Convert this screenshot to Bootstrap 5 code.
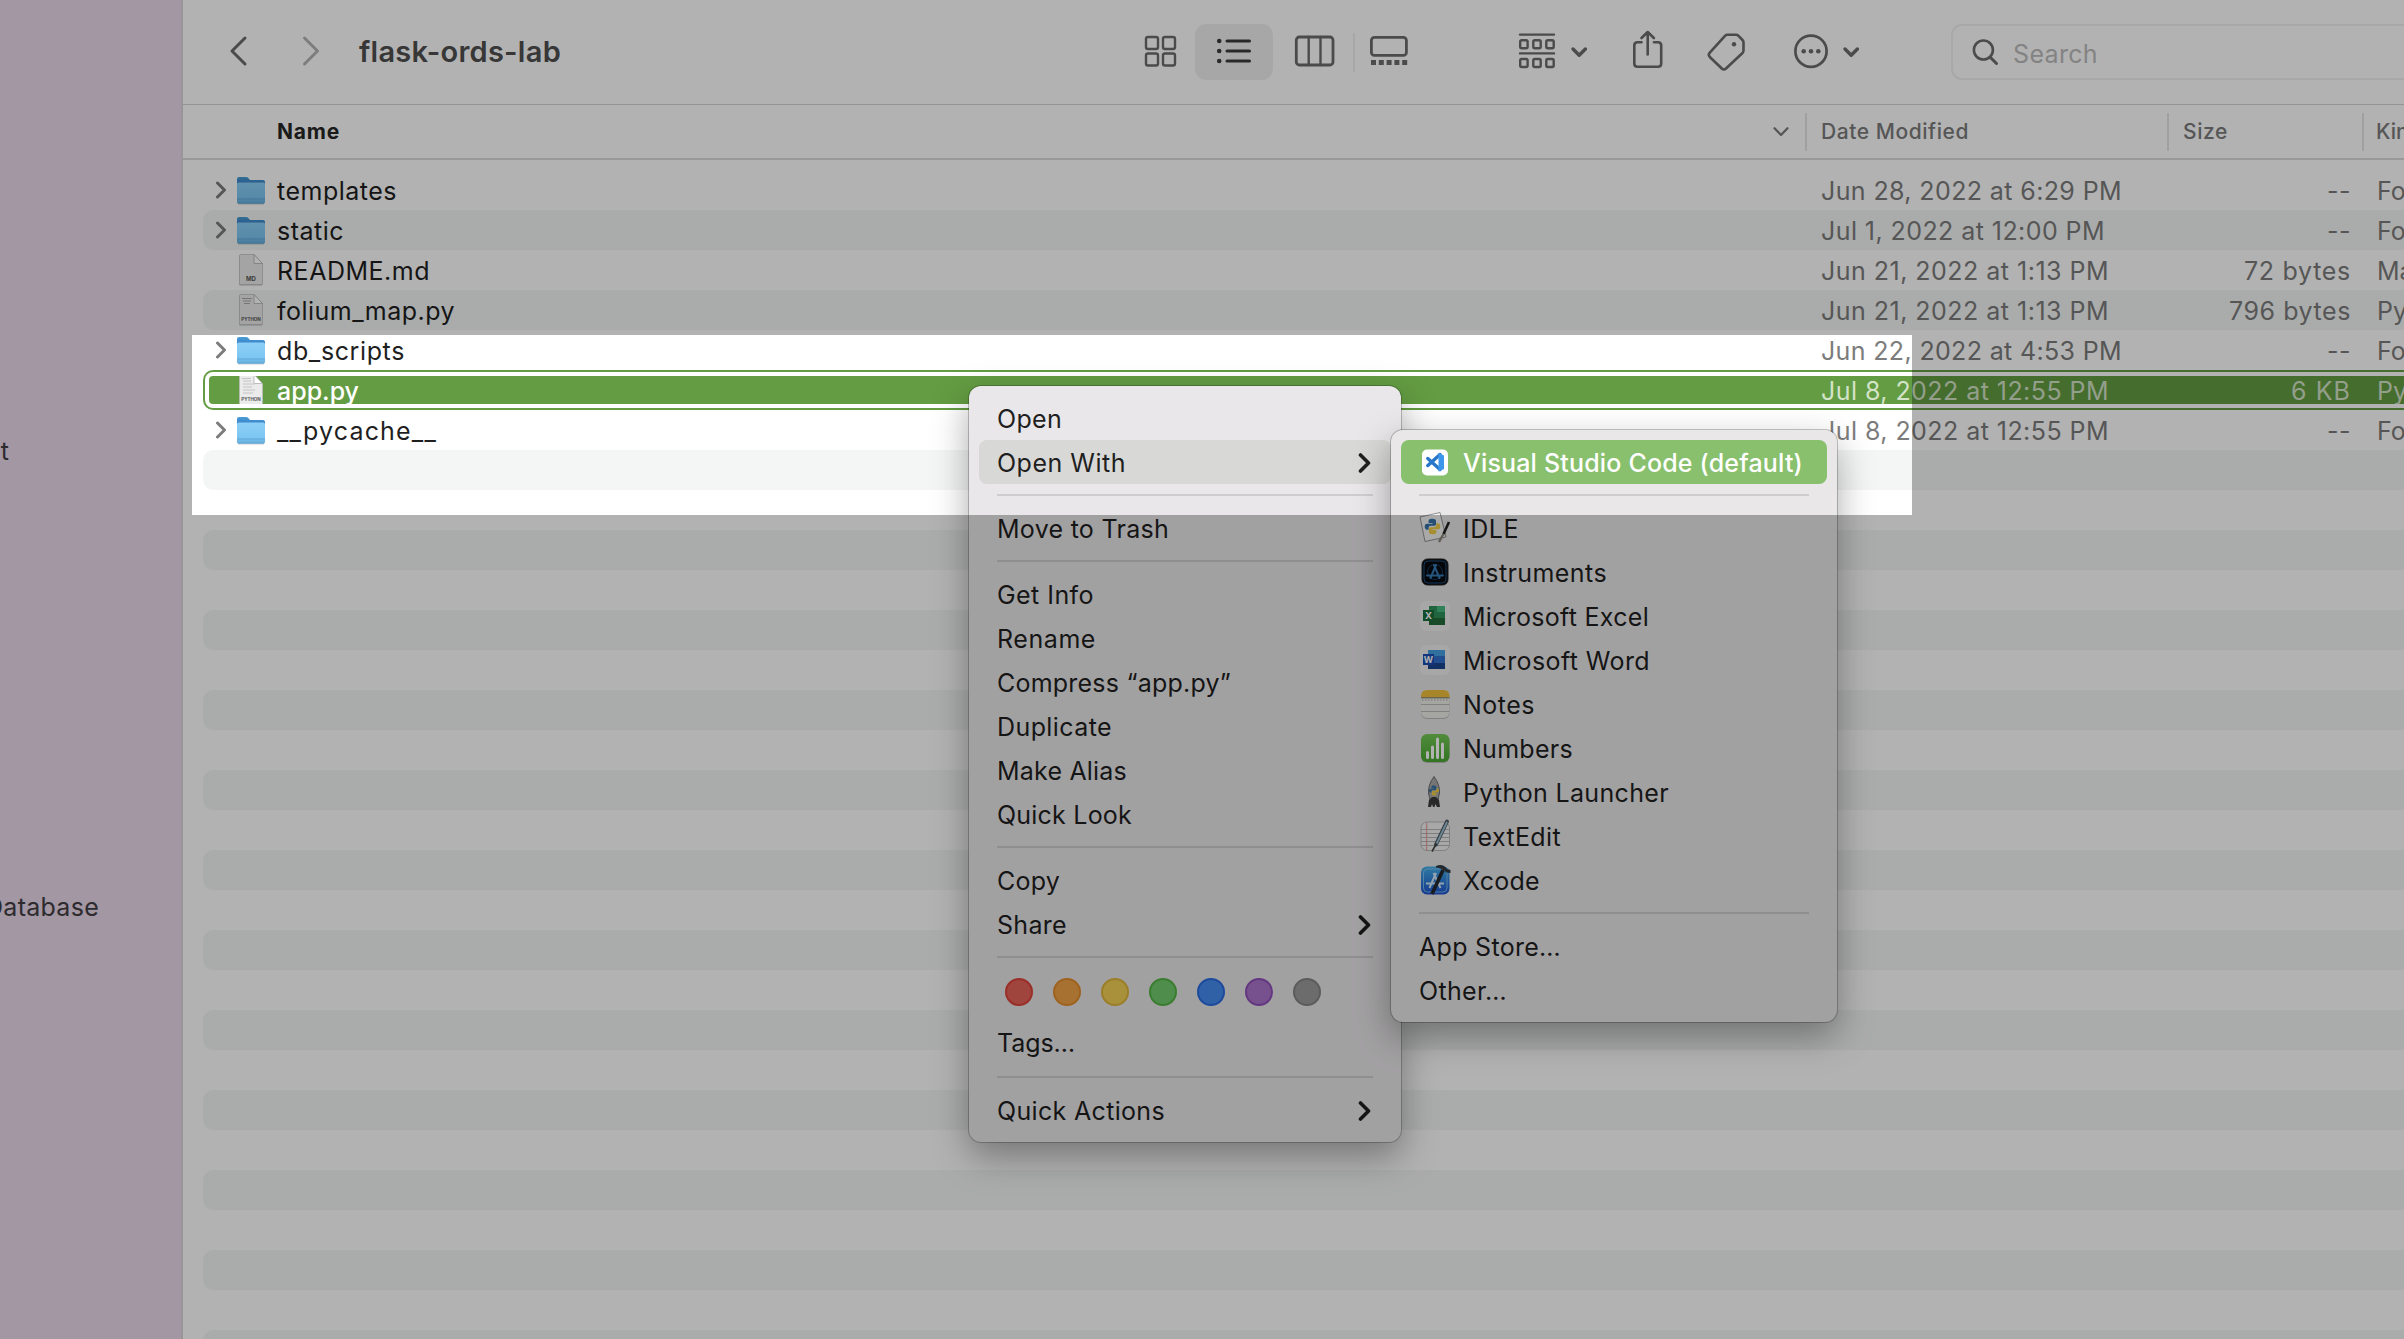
<!DOCTYPE html>
<html lang="en">
<head>
<meta charset="utf-8">
<title>flask-ords-lab</title>
<link href="https://cdn.jsdelivr.net/npm/bootstrap@5.3.0/dist/css/bootstrap.min.css" rel="stylesheet">
<style>
html,body{height:100%}
body{width:2404px;height:1339px;overflow:hidden;position:relative;background:#fff;font-family:Inter,"Liberation Sans",sans-serif;font-size:25px;color:#1f1f1f;line-height:1}
svg{display:block;flex:none;overflow:visible}
.ln{fill:none;stroke:currentColor;stroke-linecap:round;stroke-linejoin:round}
.side{width:183px;background:#e9d8ea;border-right:2px solid #dad6dd;color:#433e44}
.side-item{width:99px;height:44px;line-height:46px;direction:rtl;white-space:nowrap}
.side-item span{direction:ltr;display:inline-block}
.side-item.side-one{margin-top:428px;width:9px}
.side-two{margin-top:412px}
.win{min-width:0}
.toolbar-top{flex:none;height:105px;border-bottom:1px solid #d6d6d6;color:#6c6c6c;padding-left:45px}
.toolbar-top>*{flex:none}
.win-title{width:786px;margin-left:38px;font-size:29px;font-weight:600;color:#505050;padding-bottom:2px}
.view-on{width:78px;height:56px;border-radius:11px;background:#f0f0f0;color:#3c3c3c}
.vline{width:2px;height:39px;background:#f0f0f0}
.finder-search{width:470px;height:56px;border:2px solid #f1f1f1;border-radius:11px;padding-left:19px;color:#6c6c6c}
.finder-search span{color:#bcbcbc;padding-top:5px}
.heads{flex:none;height:55px;border-bottom:2px solid #dcdcdc;font-size:21px;font-weight:500;color:#7c7c7c}
.heads>*{flex:none;white-space:nowrap}
.h-name{width:1590px;padding-left:94px;color:#262626;font-weight:700}
.h-date{width:360px;padding-left:14px}
.h-size{width:193px;padding-left:14px}
.h-kind{padding-left:12px}
.cut{width:2px;height:38px;background:#e6e6e6}
.files{flex:none;padding:10px 0 0 20px}
.line-row{height:40px;white-space:nowrap;border-radius:10px 0 0 10px;flex:none}
.line-row:nth-child(even){background:#f4f6f5}
.cells{height:40px}
.cells>*{flex:none}
.c-tw{width:33px;padding-left:12px;color:#7c7c7c}
.c-ic{width:41px}
.c-name{width:1544px;padding-top:2px}
.c-date{width:360px;padding-top:2px}
.c-size{width:170px;padding-top:2px;text-align:right}
.c-kind{padding:2px 0 0 26px}
.dimtxt{color:#7c7c7c}
.line-row.picked{background:#fff;border:2px solid #639c42;border-right:0;padding:4px 0 4px 4px}
.picked-in{height:28px;background:#639c42;border-radius:4px 0 0 4px;overflow:hidden;color:#fff}
.picked .cells{margin:-6px 0 0 -6px}
.picked .c-name{font-weight:500}
.picked .dimtxt{color:#d3e3c8}
.ctx{position:absolute;background:#e9e7e9;border-radius:12px;padding:10px;box-shadow:0 0 0 1px rgba(0,0,0,.22),0 14px 36px rgba(0,0,0,.34);white-space:nowrap}
.ctx-a{left:969px;top:386px;width:432px;height:756px}
.ctx-b{left:1391px;top:430px;width:446px;height:592px;background:#e9e7e8}
.mi{height:44px;padding:2px 20px 0 18px;border-radius:8px}
.ctx-b .mi{padding-left:18px}
.mi.hov{background:#d8d8d7}
.mi.act{background:#88c06d;color:#fff;font-weight:500}
.rule{height:2px;margin:10px 18px;background:#cfcdcf}
.dots{height:52px;padding:0 0 4px 26px;gap:20px}
.rule.rule-low{margin-top:12px}
.dot{width:28px;height:28px;border-radius:50%;border:2px solid}
.mi-ic{width:45px;margin-left:-1px;padding-bottom:2px}
.spot{position:absolute;left:192px;top:335px;width:1720px;height:180px;box-shadow:0 0 0 2600px rgba(0,0,0,.3);pointer-events:none;z-index:20}
.m-19{margin-left:19px}.m-22{margin-left:22px}.m-15{margin-left:15px}.m-111{margin-left:111px}.m-16{margin-left:16px}.m-46{margin-left:46px}.m-45{margin-left:44px}.m-49{margin-left:49px}.m-92{margin-left:92px}.m-53{margin-left:53px}
</style>
<script src="https://cdn.jsdelivr.net/npm/bootstrap@5.3.0/dist/js/bootstrap.bundle.min.js"></script>
</head>
<body>
<svg width="0" height="0" class="position-absolute" aria-hidden="true">
<defs>
<linearGradient id="gf" x1="0" y1="0" x2="0" y2="1"><stop offset="0" stop-color="#8bd0f8"/><stop offset=".75" stop-color="#7cc5f2"/><stop offset="1" stop-color="#5fa9d8"/></linearGradient>
<linearGradient id="gb" x1="0" y1="0" x2="0" y2="1"><stop offset="0" stop-color="#4a9fd6"/><stop offset="1" stop-color="#2f6fc0"/></linearGradient>
<linearGradient id="gn" x1="0" y1="0" x2="0" y2="1"><stop offset="0" stop-color="#74c957"/><stop offset="1" stop-color="#48a830"/></linearGradient>
<linearGradient id="gx" x1="0" y1="0" x2="0" y2="1"><stop offset="0" stop-color="#44b0ea"/><stop offset="1" stop-color="#1d52cc"/></linearGradient>
<symbol id="tw" viewBox="0 0 12 18"><path class="ln" stroke-width="3" d="M2.500 2 9.500 9 2.500 16"/></symbol>
<symbol id="folder" viewBox="0 0 30 40"><path d="M2 30h26v4.500h-26z" fill="#000" opacity=".2"/><path d="M1 9q0-2 2-2h7q1.500 0 2.500 1.200L14 10h13q2 0 2 2v6H1z" fill="url(#gb)"/><path d="M1 14q0-1.500 1.500-1.500h25q1.500 0 1.500 1.500v18q0 1.700-1.700 1.700H2.700Q1 33.700 1 32z" fill="url(#gf)"/><path d="M1 29h28" stroke="#5ea7d6"/></symbol>
<symbol id="filei" viewBox="0 0 30 40"><path d="M4.500 5H18l8 9v20.500H3.500V5z" fill="#000" opacity=".25" transform="translate(0 1)"/><path d="M4 4.500h14l8.500 9.500v20.500H3.500V5z" fill="#ebebeb" stroke="#bbb" stroke-width=".7"/><path d="M18 4.500V13.500h8.500z" fill="#fff" stroke="#b0b0b0" stroke-width=".8"/></symbol>
<symbol id="py" viewBox="0 0 24 24"><path d="M12 1c-5 0-5.500 1.500-5.500 3.500V7H12v1H4.500C2 8 1 9.500 1 12s1 4.500 3.500 4.500h2V14c0-2 1.500-3 3-3h5c1.500 0 2.500-1 2.500-2.500v-4C17 2 15 1 12 1z" fill="#3572a5"/><path d="M12 23c5 0 5.500-1.500 5.500-3.500V17H12v-1h7.500c2.500 0 3.500-1.500 3.500-4s-1-4.500-3.500-4.500h-2V10c0 2-1.500 3-3 3h-5C8 13 7 14 7 15.500v4C7 22 9 23 12 23z" fill="#f0cc45"/></symbol>
<symbol id="go" viewBox="0 0 14 22"><path class="ln" stroke-width="3.600" d="M3.500 3 11.500 11 3.500 19"/></symbol>
</defs>
</svg>

<div class="d-flex h-100">
<aside class="side flex-shrink-0">
<div class="side-item side-one"><span>t</span></div>
<div class="side-item side-two"><span data-w="114">Database</span></div>
</aside>
<main class="win flex-grow-1 d-flex flex-column overflow-hidden">
<header class="toolbar-top d-flex align-items-center">
<svg width="20" height="40" viewBox="228 32 20 40"><path class="ln" stroke-width="3" d="M245 38 232 51 245 64"/></svg>
<svg class="m-53" width="20" height="40" viewBox="301 32 20 40" style="color:#b4b4b4"><path class="ln" stroke-width="3" d="M304.500 38 317.500 51 304.500 64"/></svg>
<div class="win-title"><span data-w="202">flask-ords-lab</span></div>
<svg width="31" height="40" viewBox="1145 32 31 40"><g class="ln" stroke-width="2.400"><rect x="1146" y="37" width="12" height="12" rx="2"/><rect x="1163" y="37" width="12" height="12" rx="2"/><rect x="1146" y="53.500" width="12" height="12" rx="2"/><rect x="1163" y="53.500" width="12" height="12" rx="2"/></g></svg>
<div class="view-on m-19 d-flex align-items-center justify-content-center"><svg width="34" height="40" viewBox="1217 32 34 40"><path class="ln" stroke-width="3" d="M1227 41h22.500M1227 51h22.500M1227 61h22.500"/><g fill="currentColor"><circle cx="1219.200" cy="41" r="2.300"/><circle cx="1219.200" cy="51" r="2.300"/><circle cx="1219.200" cy="61" r="2.300"/></g></svg></div>
<svg class="m-22" width="39" height="40" viewBox="1295 32 39 40"><g class="ln" stroke-width="2.800"><rect x="1296.300" y="37" width="36.700" height="28" rx="3"/><path d="M1308.700 37v28M1320.500 37v28" stroke-width="2.400"/></g></svg>
<div class="vline m-19"></div>
<svg class="m-15" width="38" height="40" viewBox="1370 32 38 40"><rect class="ln" stroke-width="2.800" x="1371.400" y="37.400" width="35" height="18" rx="3"/><path d="M1371 62.500h37" stroke="currentColor" stroke-width="5" stroke-dasharray="5 2.800"/></svg>
<svg class="m-111" width="36" height="40" viewBox="1519 32 36 40"><g class="ln" stroke-width="2.400"><path d="M1520 34.600h34M1520 53.400h34"/><rect x="1520.200" y="40.300" width="7.400" height="8" rx="1.500"/><rect x="1533.300" y="40.300" width="7.400" height="8" rx="1.500"/><rect x="1546.300" y="40.300" width="7.400" height="8" rx="1.500"/><rect x="1520.200" y="59" width="7.400" height="8" rx="1.500"/><rect x="1533.300" y="59" width="7.400" height="8" rx="1.500"/><rect x="1546.300" y="59" width="7.400" height="8" rx="1.500"/></g></svg>
<svg class="m-16" width="16" height="40" viewBox="1571 32 16 40"><path class="ln" stroke-width="3.400" d="M1573 49 1579.200 55.200 1585.400 49"/></svg>
<svg class="m-46" width="30" height="40" viewBox="1633 32 30 40"><path class="ln" stroke-width="2.600" d="M1641.500 42.300h-4q-3.200 0-3.200 3.200v18q0 3.200 3.200 3.200h20.500q3.200 0 3.200-3.200v-18q0-3.200-3.200-3.200h-4M1647.700 54.500V32.500M1641.500 38 1647.700 32 1653.900 38"/></svg>
<svg class="m-45" width="38" height="40" viewBox="1707 32 38 40"><path class="ln" stroke-width="2.600" d="M1727.500 34.800h8.500q1.500 0 2.500 1l4 4.200q1 1 1 2.500v8q0 1.500-1 2.500l-16.500 15.500q-2.200 2-4.200 0l-12-11.500q-2-2.200 0-4.400l15.200-16.800q1-1 2.500-1z"/><circle cx="1734" cy="44.300" r="2.200" fill="currentColor"/></svg>
<svg class="m-49" width="34" height="40" viewBox="1794 32 34 40"><circle class="ln" stroke-width="2.700" cx="1811" cy="51.200" r="15.600"/><g fill="currentColor"><circle cx="1803.700" cy="51.200" r="2.300"/><circle cx="1811" cy="51.200" r="2.300"/><circle cx="1818.300" cy="51.200" r="2.300"/></g></svg>
<svg class="m-15" width="16" height="40" viewBox="1843 32 16 40"><path class="ln" stroke-width="3.400" d="M1845 49 1851.200 55.200 1857.400 49"/></svg>
<div class="finder-search m-92 d-flex align-items-center"><svg width="41" height="40" viewBox="1972 32 41 40"><g class="ln" stroke-width="2.600"><circle cx="1983.400" cy="50" r="9.500"/><path d="M1990.500 57.500 1996.500 63.500" stroke-width="3"/></g></svg><span data-w="85">Search</span></div>
</header>

<div class="heads d-flex align-items-center">
<div class="h-name"><span data-w="63">Name</span></div>
<svg width="16" height="10" viewBox="0 0 16 10"><path class="ln" stroke-width="2.200" d="M1.500 1.200 8 8 14.500 1.200"/></svg>
<div class="cut m-16"></div>
<div class="h-date"><span data-w="148">Date Modified</span></div>
<div class="cut"></div>
<div class="h-size"><span data-w="45">Size</span></div>
<div class="cut"></div>
<div class="h-kind">Kind</div>
</div>

<section class="files d-flex flex-column">
<div class="line-row"><div class="cells d-flex align-items-center"><div class="c-tw"><svg width="12" height="18"><use href="#tw"/></svg></div><div class="c-ic"><svg width="30" height="40"><use href="#folder"/></svg></div><div class="c-name"><span data-w="120">templates</span></div><div class="c-date dimtxt"><span data-w="301">Jun 28, 2022 at 6:29 PM</span></div><div class="c-size dimtxt"><span data-w="24">--</span></div><div class="c-kind dimtxt">Folder</div></div></div>
<div class="line-row"><div class="cells d-flex align-items-center"><div class="c-tw"><svg width="12" height="18"><use href="#tw"/></svg></div><div class="c-ic"><svg width="30" height="40"><use href="#folder"/></svg></div><div class="c-name"><span data-w="67">static</span></div><div class="c-date dimtxt"><span data-w="284">Jul 1, 2022 at 12:00 PM</span></div><div class="c-size dimtxt"><span data-w="24">--</span></div><div class="c-kind dimtxt">Folder</div></div></div>
<div class="line-row"><div class="cells d-flex align-items-center"><div class="c-tw"></div><div class="c-ic"><svg width="30" height="40"><use href="#filei"/><text x="15" y="31" font-size="6" font-weight="700" fill="#555" text-anchor="middle">MD</text></svg></div><div class="c-name"><span data-w="153">README.md</span></div><div class="c-date dimtxt"><span data-w="288">Jun 21, 2022 at 1:13 PM</span></div><div class="c-size dimtxt"><span data-w="107">72 bytes</span></div><div class="c-kind dimtxt">Markdown</div></div></div>
<div class="line-row"><div class="cells d-flex align-items-center"><div class="c-tw"></div><div class="c-ic"><svg width="30" height="40"><use href="#filei"/><path d="M6 8.500h10M7 11h8M8 13.500h6" stroke="#aaa"/><text x="15" y="31" font-size="4.500" font-weight="700" fill="#555" text-anchor="middle">PYTHON</text></svg></div><div class="c-name"><span data-w="178">folium_map.py</span></div><div class="c-date dimtxt"><span data-w="288">Jun 21, 2022 at 1:13 PM</span></div><div class="c-size dimtxt"><span data-w="122">796 bytes</span></div><div class="c-kind dimtxt">Python</div></div></div>
<div class="line-row"><div class="cells d-flex align-items-center"><div class="c-tw"><svg width="12" height="18"><use href="#tw"/></svg></div><div class="c-ic"><svg width="30" height="40"><use href="#folder"/></svg></div><div class="c-name"><span data-w="128">db_scripts</span></div><div class="c-date dimtxt"><span data-w="301">Jun 22, 2022 at 4:53 PM</span></div><div class="c-size dimtxt"><span data-w="24">--</span></div><div class="c-kind dimtxt">Folder</div></div></div>
<div class="line-row picked"><div class="picked-in"><div class="cells d-flex align-items-center"><div class="c-tw"></div><div class="c-ic"><svg width="30" height="40"><use href="#filei"/><path d="M6 8.500h9M7 11h8M7 14h12M7 17h9M7 20h12M7 23h10" stroke="#c4c4c4"/><text x="15" y="31" font-size="4.500" font-weight="700" fill="#555" text-anchor="middle">PYTHON</text></svg></div><div class="c-name"><span data-w="82">app.py</span></div><div class="c-date dimtxt"><span data-w="288">Jul 8, 2022 at 12:55 PM</span></div><div class="c-size dimtxt"><span data-w="60">6 KB</span></div><div class="c-kind dimtxt">Python</div></div></div></div>
<div class="line-row"><div class="cells d-flex align-items-center"><div class="c-tw"><svg width="12" height="18"><use href="#tw"/></svg></div><div class="c-ic"><svg width="30" height="40"><use href="#folder"/></svg></div><div class="c-name"><span data-w="160">__pycache__</span></div><div class="c-date dimtxt"><span data-w="288">Jul 8, 2022 at 12:55 PM</span></div><div class="c-size dimtxt"><span data-w="24">--</span></div><div class="c-kind dimtxt">Folder</div></div></div>
<div class="line-row"></div><div class="line-row"></div><div class="line-row"></div><div class="line-row"></div><div class="line-row"></div><div class="line-row"></div><div class="line-row"></div><div class="line-row"></div><div class="line-row"></div><div class="line-row"></div><div class="line-row"></div><div class="line-row"></div><div class="line-row"></div><div class="line-row"></div><div class="line-row"></div><div class="line-row"></div><div class="line-row"></div><div class="line-row"></div><div class="line-row"></div><div class="line-row"></div><div class="line-row"></div><div class="line-row"></div><div class="line-row"></div>
</section>
</main>
</div>

<nav class="ctx ctx-a">
<div class="mi d-flex align-items-center"><span data-w="65">Open</span></div>
<div class="mi hov d-flex align-items-center justify-content-between"><span data-w="129">Open With</span><svg width="14" height="22"><use href="#go"/></svg></div>
<div class="rule"></div>
<div class="mi d-flex align-items-center"><span data-w="172">Move to Trash</span></div>
<div class="rule"></div>
<div class="mi d-flex align-items-center"><span data-w="97">Get Info</span></div>
<div class="mi d-flex align-items-center"><span data-w="99">Rename</span></div>
<div class="mi d-flex align-items-center"><span data-w="234">Compress “app.py”</span></div>
<div class="mi d-flex align-items-center"><span data-w="115">Duplicate</span></div>
<div class="mi d-flex align-items-center"><span data-w="130">Make Alias</span></div>
<div class="mi d-flex align-items-center"><span data-w="135">Quick Look</span></div>
<div class="rule"></div>
<div class="mi d-flex align-items-center"><span data-w="63">Copy</span></div>
<div class="mi d-flex align-items-center justify-content-between"><span data-w="70">Share</span><svg width="14" height="22"><use href="#go"/></svg></div>
<div class="rule"></div>
<div class="dots d-flex align-items-center">
<div class="dot" style="background:#e6625a;border-color:#dc443b"></div>
<div class="dot" style="background:#f0a347;border-color:#e28d2c"></div>
<div class="dot" style="background:#f2cf54;border-color:#dfb53a"></div>
<div class="dot" style="background:#70cb6c;border-color:#54b446"></div>
<div class="dot" style="background:#468cee;border-color:#2a6be0"></div>
<div class="dot" style="background:#a975cc;border-color:#904fb9"></div>
<div class="dot" style="background:#9b9b9d;border-color:#848486"></div>
</div>
<div class="mi d-flex align-items-center"><span data-w="78">Tags…</span></div>
<div class="rule rule-low"></div>
<div class="mi d-flex align-items-center justify-content-between"><span data-w="168">Quick Actions</span><svg width="14" height="22"><use href="#go"/></svg></div>
</nav>

<nav class="ctx ctx-b">
<div class="mi act d-flex align-items-center"><div class="mi-ic"><svg width="34" height="34" viewBox="0 0 34 34"><rect x="4" y="4.500" width="26" height="26" rx="5" fill="#fff"/><path d="M22 9.500 9.800 20.500M22 24.500 9.800 13.500" stroke="#2876c8" stroke-width="3.400" stroke-linecap="round" fill="none"/><path d="M20.500 8 26 10.500v13.500l-5.500 2.500z" fill="#3c97ec"/></svg></div><span data-w="340">Visual Studio Code (default)</span></div>
<div class="rule"></div>
<div class="mi d-flex align-items-center"><div class="mi-ic"><svg width="34" height="34" viewBox="0 0 34 34"><path d="M2 6 22 1.500 28 26 7 30.500z" fill="#f3f3f3" stroke="#777" stroke-width=".8"/><use href="#py" x="6" y="7" width="17" height="17"/><path d="M31 11 25.500 23" stroke="#222" stroke-width="2.600"/><path d="M25.500 23 21 31" stroke="#8a8478" stroke-width="2.400"/></svg></div><span data-w="56">IDLE</span></div>
<div class="mi d-flex align-items-center"><div class="mi-ic"><svg width="34" height="34" viewBox="0 0 34 34"><rect x="4" y="4" width="26" height="26" rx="5.500" fill="#06090f" stroke="#222"/><rect x="6" y="6" width="22" height="22" rx="4" fill="none" stroke="#21507c"/><g fill="none" stroke="#3579b4" stroke-linecap="round"><circle cx="17" cy="17" r="7.500" stroke="#183a5c"/><path stroke-width="2" d="M16 10 21.500 23M18 10 12.500 23M9 20.500h16"/></g></svg></div><span data-w="144">Instruments</span></div>
<div class="mi d-flex align-items-center"><div class="mi-ic"><svg width="34" height="34" viewBox="0 0 34 34"><rect x="2" y="2" width="30" height="30" rx="6" fill="#efefef"/><path d="M11 7h16v19H11z" fill="#2f9159"/><path d="M19 7h8v6h-8z" fill="#45b87e"/><path d="M11 19h16v7H11z" fill="#236b38"/><path d="M5 11h11v11H5z" fill="#1c6e3b"/><text x="10.500" y="20" font-size="9.500" font-weight="700" fill="#fff" text-anchor="middle">X</text></svg></div><span data-w="186">Microsoft Excel</span></div>
<div class="mi d-flex align-items-center"><div class="mi-ic"><svg width="34" height="34" viewBox="0 0 34 34"><rect x="2" y="2" width="30" height="30" rx="6" fill="#efefef"/><path d="M10 7h17v19H10z" fill="#2f70cd"/><path d="M10 7h17v6H10z" fill="#479fe4"/><path d="M10 20h17v6H10z" fill="#1b458f"/><path d="M5 11h11v11H5z" fill="#1b4cb5"/><text x="10.500" y="20" font-size="9" font-weight="700" fill="#fff" text-anchor="middle">W</text></svg></div><span data-w="187">Microsoft Word</span></div>
<div class="mi d-flex align-items-center"><div class="mi-ic"><svg width="34" height="34" viewBox="0 0 34 34"><rect x="3" y="4" width="28.500" height="28" rx="6" fill="#000" opacity=".2"/><rect x="3" y="3" width="28.500" height="28" rx="6" fill="#edece8"/><path d="M3 10.500V9q0-6 6-6h16.500q6 0 6 6v1.500z" fill="#efc13c"/><path d="M3 10.800h28.500" stroke="#77705c"/><path d="M4 13h27" stroke="#aaa" stroke-dasharray="1.500 1.500"/><path d="M3 17.500h28.500M3 24.500h28.500" stroke="#b9b8b6"/></svg></div><span data-w="72">Notes</span></div>
<div class="mi d-flex align-items-center"><div class="mi-ic"><svg width="34" height="34" viewBox="0 0 34 34"><rect x="3" y="4" width="28.500" height="28" rx="6" fill="#000" opacity=".2"/><rect x="3" y="3" width="28.500" height="28" rx="6" fill="url(#gn)"/><path d="M9.500 26.500v-5M14.500 26.500v-10.500M19.500 26.500V8M24.500 26.500V13" stroke="#fff" stroke-width="3" stroke-linecap="round"/></svg></div><span data-w="110">Numbers</span></div>
<div class="mi d-flex align-items-center"><div class="mi-ic"><svg width="34" height="34" viewBox="0 0 34 34"><path d="M16 1.500q6 8 5.500 16.500L20 25h-8l-1.500-7Q10 9.500 16 1.500z" fill="#a9a9a9" stroke="#555" stroke-width=".8"/><path d="M11 25l3-3h4l3 3 1 7h-3l-1.500-3-1 3h-1.500l-1-3L13 32h-3z" fill="#3b3b3b"/><use href="#py" x="10.500" y="9.500" width="11" height="12"/></svg></div><span data-w="206">Python Launcher</span></div>
<div class="mi d-flex align-items-center"><div class="mi-ic"><svg width="34" height="34" viewBox="0 0 34 34"><rect x="3" y="3" width="28.500" height="28.500" rx="6" fill="#f1f1f1" stroke="#aaa" stroke-width=".8"/><path d="M3 10.500h28.500M3 14.500h28.500M3 18.500h28.500M3 22.500h28.500M3 26.500h28.500" stroke="#b5b5b5"/><path d="M8.700 3.500v28" stroke="#e2928f"/><path d="M29 2.500 18 25.500" stroke="#4d5c66" stroke-width="4" stroke-linecap="round"/><path d="M29 3 18.500 25" stroke="#9fc0d2" stroke-width="1.800"/><path d="M18.500 24.500 14 32.500" stroke="#444" stroke-width="1.600"/></svg></div><span data-w="98">TextEdit</span></div>
<div class="mi d-flex align-items-center"><div class="mi-ic"><svg width="34" height="34" viewBox="0 0 34 34"><rect x="3" y="3.500" width="28.500" height="28" rx="6" fill="url(#gx)"/><rect x="5.500" y="6" width="23.500" height="23" rx="4" fill="none" stroke="#8ec6f3" stroke-width=".8"/><g fill="none" stroke="#d4e9fb" stroke-width="2"><path d="M18 10 11.500 25M15.500 10 22.500 25M8 20.500h18"/></g><path d="M25 7 14 31" stroke="#23272e" stroke-width="3.600"/><path d="M18 3q7-3 11 3l3.500 1v3l-4-.5Q24 5 18 4.500z" fill="#34383e"/></svg></div><span data-w="77">Xcode</span></div>
<div class="rule"></div>
<div class="mi d-flex align-items-center"><span data-w="142">App Store…</span></div>
<div class="mi d-flex align-items-center"><span data-w="88">Other…</span></div>
</nav>

<div class="spot"></div>

<script>
document.querySelectorAll('[data-w]').forEach(function (el) {
  el.style.whiteSpace = 'nowrap';
  var r = document.createRange();
  r.selectNodeContents(el);
  var w = r.getBoundingClientRect().width;
  el.style.letterSpacing = ((el.dataset.w - w) / el.textContent.length).toFixed(3) + 'px';
});
</script>
</body>
</html>
